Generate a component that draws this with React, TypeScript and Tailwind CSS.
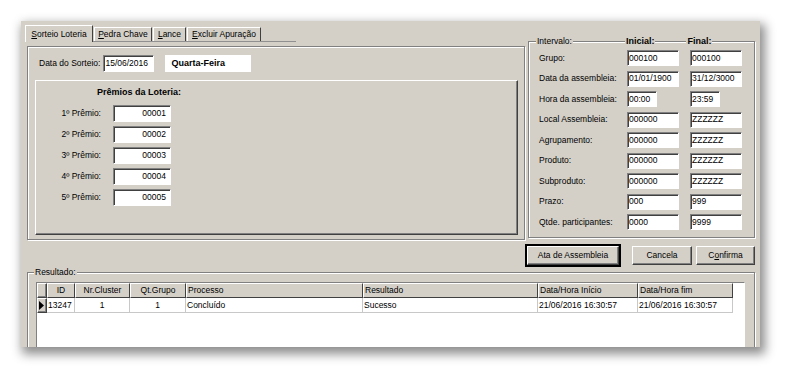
import React from 'react';

// classic win32 bevels
const sunken =
  'bg-white border border-t-[#808080] border-l-[#808080] border-r-white border-b-white shadow-[inset_1px_1px_0_#404040]';
const raised =
  'bg-[#d4d0c8] border border-t-white border-l-white border-r-[#404040] border-b-[#404040] shadow-[inset_-1px_-1px_0_#808080]';
const etched =
  'border border-[#808080] shadow-[inset_1px_1px_0_#ffffff,1px_1px_0_#ffffff]';

function Input({ value, className = '', right = false }: { value: string; className?: string; right?: boolean }) {
  return (
    <div className={`${sunken} flex items-center ${right ? 'justify-end pr-[4px]' : 'pl-[1px]'} ${className}`}>
      {value}
    </div>
  );
}

const tabs = [
  { label: 'Sorteio Loteria', w: 'w-[68px]' },
  { label: 'Pedra Chave', w: 'w-[58px]' },
  { label: 'Lance', w: 'w-[33px]' },
  { label: 'Excluir Apuração', w: 'w-[74px]' },
];

const premios = ['00001', '00002', '00003', '00004', '00005'];

const intervalo: { label: string; ini: string; fim: string; short?: boolean }[] = [
  { label: 'Grupo:', ini: '000100', fim: '000100' },
  { label: 'Data da assembleia:', ini: '01/01/1900', fim: '31/12/3000' },
  { label: 'Hora da assembleia:', ini: '00:00', fim: '23:59', short: true },
  { label: 'Local Assembleia:', ini: '000000', fim: 'ZZZZZZ' },
  { label: 'Agrupamento:', ini: '000000', fim: 'ZZZZZZ' },
  { label: 'Produto:', ini: '000000', fim: 'ZZZZZZ' },
  { label: 'Subproduto:', ini: '000000', fim: 'ZZZZZZ' },
  { label: 'Prazo:', ini: '000', fim: '999' },
  { label: 'Qtde. participantes:', ini: '0000', fim: '9999' },
];

const cols = [
  { title: 'ID', w: 'w-[28px]', center: true },
  { title: 'Nr.Cluster', w: 'w-[55px]', center: true },
  { title: 'Qt.Grupo', w: 'w-[56px]', center: true },
  { title: 'Processo', w: 'w-[177px]' },
  { title: 'Resultado', w: 'w-[175px]' },
  { title: 'Data/Hora Início', w: 'w-[100px]' },
  { title: 'Data/Hora fim', w: 'w-[95px]' },
];

const row = ['13247', '1', '1', 'Concluído', 'Sucesso', '21/06/2016 16:30:57', '21/06/2016 16:30:57'];

function Accel({ text, at = 0 }: { text: string; at?: number }) {
  return (
    <>
      {text.slice(0, at)}
      <span className="underline underline-offset-[1px]">{text[at]}</span>
      {text.slice(at + 1)}
    </>
  );
}

export default function App() {
  return (
    <div className="min-h-screen bg-white pt-[21px] pl-[21px]">
      <div className="w-[739px] h-[326px] bg-[#d4d0c8] overflow-hidden shadow-[3px_5px_10px_2px_rgba(0,0,0,0.45)] text-[8.5px] leading-none text-black font-['Liberation_Sans',Arial,sans-serif]">
        <div className="flex h-[223px]">
          {/* left side: tabs + page */}
          <div className="w-[507px]">
            <div className="ml-[4px] mt-[4px] w-[271px] h-[17px] flex items-end border-b border-b-[#909090]">
              {tabs.map((t, i) => (
                <div
                  key={t.label}
                  className={`${t.w} flex items-center justify-center border border-b-0 border-t-white border-l-white border-r-[#404040] ${
                    i === 0 ? 'h-[17px] -mb-px relative bg-[#d4d0c8]' : 'h-[14px] ml-px'
                  }`}
                >
                  <Accel text={t.label} />
                </div>
              ))}
            </div>

            <div className={`ml-[6px] mt-[4px] w-[498px] h-[194px] ${etched}`}>
              <div className="flex items-center mt-[8px] ml-[11px] h-[17px]">
                <span>Data do Sorteio:</span>
                <Input value="15/06/2016" className="ml-[3px] w-[51px] h-[17px]" />
                <div className="ml-[11px] w-[86px] h-[17px] bg-white flex items-center pl-[6px] font-bold text-[9px]">
                  Quarta-Feira
                </div>
              </div>

              <div className="ml-[7px] mt-[8px] w-[483px] h-[155px] border border-t-white border-l-white border-r-[#404040] border-b-[#404040] shadow-[inset_-1px_-1px_0_#808080]">
                <div className="mt-[7px] pl-[61px] font-bold text-[9px]">Prêmios da Loteria:</div>
                <div className="mt-[8px] flex flex-col gap-[4px]">
                  {premios.map((p, i) => (
                    <div key={p} className="flex items-center h-[17px]">
                      <span className="w-[65px] text-right">{i + 1}º Prêmio:</span>
                      <Input value={p} right className="ml-[12px] w-[58px] h-[17px]" />
                    </div>
                  ))}
                </div>
              </div>
            </div>
          </div>

          {/* right side: intervalo */}
          <div className={`relative mt-[20px] w-[227px] h-[197px] ${etched}`}>
            <div className="absolute -top-[5px] left-0 flex text-[8.5px]">
              <span className="ml-[7px] px-[1px] bg-[#d4d0c8]">Intervalo:</span>
              <span className="ml-[52px] px-[1px] bg-[#d4d0c8] font-bold text-[9px]">Inicial:</span>
              <span className="ml-[31px] px-[1px] bg-[#d4d0c8] font-bold text-[9px]">Final:</span>
            </div>
            <div className="mt-[8px] pl-[10px] flex flex-col gap-[4.5px]">
              {intervalo.map((r) => (
                <div key={r.label} className="flex items-center h-[16px]">
                  <span className="w-[88px]">{r.label}</span>
                  <div className="w-[63px]">
                    <Input value={r.ini} className={`${r.short ? 'w-[30px]' : 'w-[52px]'} h-[16px]`} />
                  </div>
                  <Input value={r.fim} className={`${r.short ? 'w-[30px]' : 'w-[52px]'} h-[16px]`} />
                </div>
              ))}
            </div>
          </div>
        </div>

        {/* buttons */}
        <div className="flex items-center h-[23px] ml-[504px]">
          <div className="w-[96px] h-[23px] border-2 border-black">
            <div className={`${raised} w-full h-full flex items-center justify-center`}>Ata de Assembleia</div>
          </div>
          <div className={`${raised} ml-[11px] w-[60px] h-[19px] flex items-center justify-center`}>Cancela</div>
          <div className={`${raised} ml-[4px] w-[59px] h-[19px] flex items-center justify-center`}>
            <Accel text="Confirma" at={1} />
          </div>
        </div>

        {/* resultado */}
        <div className={`relative ml-[6px] mt-[5px] w-[728px] h-[120px] ${etched}`}>
          <span className="absolute -top-[5px] left-[6px] px-[1px] bg-[#d4d0c8]">Resultado:</span>
          <div className="ml-[8px] mt-[9px] w-[709px] h-[100px] bg-white border border-t-[#808080] border-l-[#808080] border-r-white border-b-white">
            <div className="flex h-[15px]">
              <div className={`${raised} w-[10px] h-full`} />
              {cols.map((c) => (
                <div
                  key={c.title}
                  className={`${c.w} h-full bg-[#d4d0c8] border border-t-white border-l-white border-r-[#404040] border-b-[#404040] flex items-center ${
                    c.center ? 'justify-center' : 'pl-[1px]'
                  }`}
                >
                  {c.title}
                </div>
              ))}
            </div>
            <div className="flex h-[15px]">
              <div className={`${raised} w-[10px] h-full flex items-center pl-[1px]`}>
                <svg width="5" height="9" viewBox="0 0 5 9">
                  <path d="M0 0 L5 4.5 L0 9 Z" fill="#000" />
                </svg>
              </div>
              {cols.map((c, i) => (
                <div
                  key={c.title}
                  className={`${c.w} h-full border-r border-b border-[#c8c8c8] flex items-center ${
                    i === 1 || i === 2 ? 'justify-center' : 'pl-[1px]'
                  }`}
                >
                  {row[i]}
                </div>
              ))}
            </div>
          </div>
        </div>
      </div>
    </div>
  );
}
